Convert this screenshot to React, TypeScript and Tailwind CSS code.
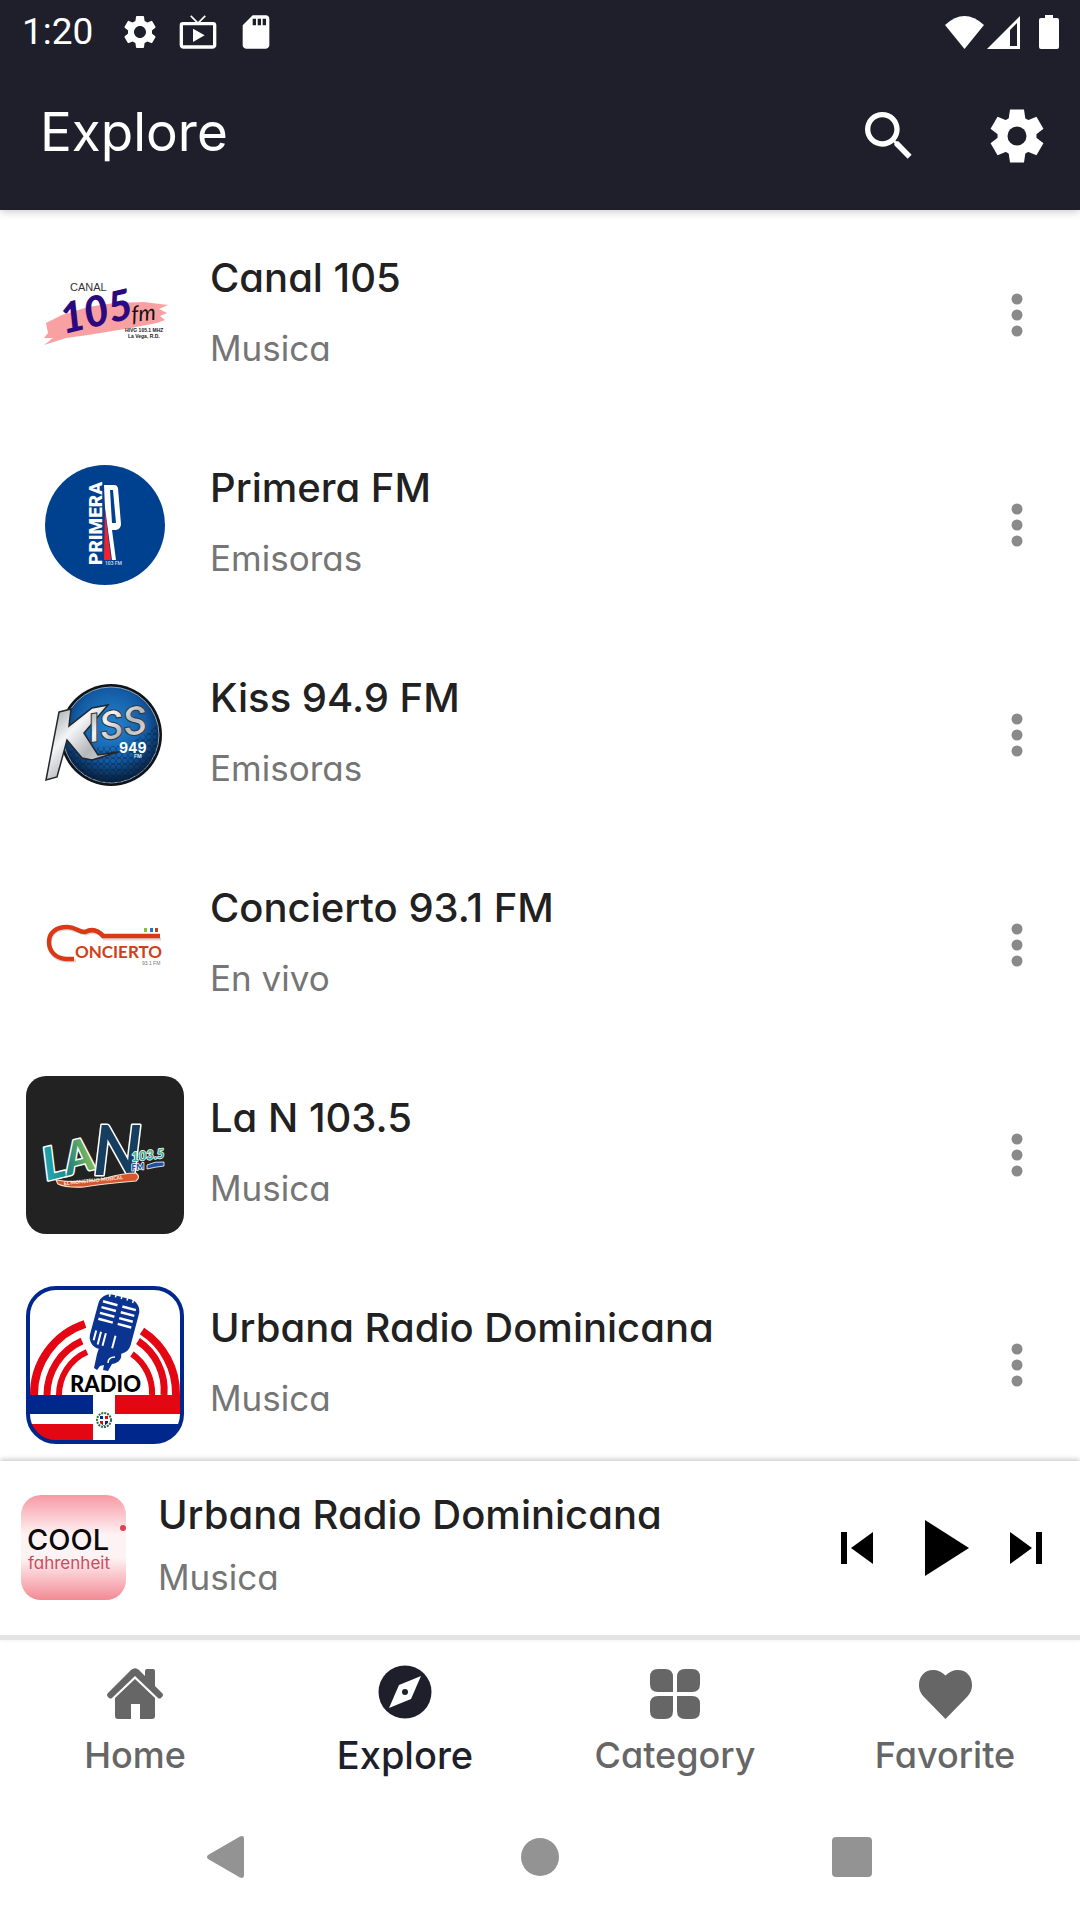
import type { ReactNode } from "react";
import { MdLiveTv, MdSdStorage, MdSearch, MdSettings } from "react-icons/md";

const round = { fontFeatureSettings: '"cv11"' };

function CanalLogo() {
  return (
    <svg viewBox="0 0 158 158" className="size-full" aria-hidden="true">
      <path
        d="M20 87 36 79 62 71 88 67 118 66 142 69 133 73 141 77 134 80 139 84 131 87 105 92 62 99 40 102 18 109 27 102 18 102 22 97Z"
        fill="#f9a0a2"
      />
      <text x="44" y="55" fontSize="11" fontFamily="Liberation Sans" fill="#333">CANAL</text>
      <g transform="rotate(-13 38 99)">
        <text x="38" y="98" fontSize="42" fontWeight="900" fontStyle="italic" fontFamily="Lato, sans-serif" fill="#2b0a80">105</text>
      </g>
      <g transform="rotate(-5 104 87)">
        <text x="106" y="86" fontSize="22" fontStyle="italic" fontFamily="Lato, sans-serif" fill="#111">fm</text>
      </g>
      <text x="99" y="96" fontSize="5" fontWeight="700" fontFamily="Liberation Sans" fill="#222">HIVG 105.1 MHZ</text>
      <text x="102" y="102" fontSize="5" fontWeight="700" fontFamily="Liberation Sans" fill="#222">La Vega, R.D.</text>
    </svg>
  );
}

function PrimeraLogo() {
  return (
    <svg viewBox="0 0 158 158" className="size-full" aria-hidden="true">
      <circle cx="79" cy="79" r="60" fill="#00418f" />
      <text transform="rotate(-90 76 119)" x="76" y="119" fontSize="19" fontWeight="900" fontFamily="Roboto, sans-serif" fill="#fff">PRIMERA</text>
      <path d="M78 39h11q2 0 3 3l3 36q0 5-5 6h-4l4 30h-4L79 62Z" fill="#fff" />
      <path d="M84 44h3l3 33h-4Z" fill="#00418f" />
      <path d="M79 64 85 114H78Z" fill="#f4212c" />
      <text x="79" y="119" fontSize="5" fontWeight="700" fontFamily="Roboto" fill="#b9cbe6">103 FM</text>
    </svg>
  );
}

function KissLogo() {
  return (
    <svg viewBox="0 0 158 158" className="size-full" aria-hidden="true">
      <defs>
        <radialGradient id="kissDisc" cx="50%" cy="40%" r="62%">
          <stop offset="0" stopColor="#2486d2" />
          <stop offset="0.6" stopColor="#135ba5" />
          <stop offset="1" stopColor="#05172f" />
        </radialGradient>
        <linearGradient id="kissSilver" x1="0" y1="0" x2="1" y2="1">
          <stop offset="0" stopColor="#8b8f94" />
          <stop offset="0.35" stopColor="#f4f5f6" />
          <stop offset="0.6" stopColor="#b4b7bb" />
          <stop offset="1" stopColor="#eceded" />
        </linearGradient>
        <pattern id="kissMesh" width="6" height="6" patternUnits="userSpaceOnUse">
          <path d="M0 3 1.500.5h3L6 3 4.500 5.500h-3Z" fill="none" stroke="#04142c" strokeWidth="0.7" opacity="0.55" />
        </pattern>
      </defs>
      <circle cx="85" cy="79" r="51" fill="#101317" />
      <circle cx="85" cy="79" r="48" fill="url(#kissDisc)" stroke="#8fa4ba" strokeWidth="1" />
      <path d="M40 94a48 48 0 0 0 92 0l0-25-30 20Z" fill="url(#kissMesh)" />
      <path
        d="M33 56 45 53 43 70 66 52 82 49 58 77 72 99 92 96 66 104 56 102 41 84 31 121 20 124Z"
        fill="url(#kissSilver)"
        stroke="#22262b"
        strokeWidth="1.500"
      />
      <g transform="rotate(-10 64 90)">
        <text x="65" y="87" fontSize="40" fontWeight="700" fontStyle="italic" fontFamily="Roboto, sans-serif" fill="url(#kissSilver)" stroke="#30363d" strokeWidth="1">ISS</text>
      </g>
      <text x="93" y="97" fontSize="14" fontWeight="700" fontFamily="Inter, sans-serif" fill="#fff">949</text>
      <text x="108" y="102" fontSize="5" fontWeight="700" fontFamily="Inter, sans-serif" fill="#dfe8f2">FM</text>
    </svg>
  );
}

function ConciertoLogo() {
  return (
    <svg viewBox="0 0 158 158" className="size-full" aria-hidden="true">
      <path d="M50 95H41C28 95 24 86 24 79 24 66 32 63 41 63c9 0 12 5 19 5 5-2 13-3 18 5h57" fill="none" stroke="#d9d9d9" strokeWidth="3" />
      <path d="M48 93H40C28 92 23 84 23 76 23 66 31 61 41 61c9 0 11 5 18 5 6-3 12-3 18 4h57" fill="none" stroke="#d93a15" strokeWidth="4.500" />
      <path d="M118 62h3v4h-3Z" fill="#8bbf3a" />
      <path d="M124 62h3v4h-3Z" fill="#2f74b5" />
      <path d="M129 62h3v4h-3Z" fill="#b8432a" />
      <text x="49" y="92" fontSize="17" fontWeight="700" fontFamily="Lato, sans-serif" fill="#cf4016">ONCIERTO</text>
      <text x="116" y="99" fontSize="5" fontFamily="Liberation Sans" fill="#777">93.1 FM</text>
    </svg>
  );
}

function LanLogo() {
  return (
    <svg viewBox="0 0 158 158" className="size-full" aria-hidden="true">
      <defs>
        <linearGradient id="lanTeal" x1="0" x2="1">
          <stop offset="0" stopColor="#1fa9b5" />
          <stop offset="0.5" stopColor="#20857f" />
          <stop offset="1" stopColor="#8cc152" />
        </linearGradient>
        <linearGradient id="lanFm" x1="0" y1="0" x2="0" y2="1">
          <stop offset="0" stopColor="#63c06a" />
          <stop offset="1" stopColor="#1d9fc0" />
        </linearGradient>
      </defs>
      <g fontFamily="Lato, sans-serif" fontWeight="900" fontStyle="italic" stroke="#fff" strokeLinejoin="round">
        <g transform="rotate(-14 24 105)">
          <text x="21" y="104" fontSize="45" fill="url(#lanTeal)" strokeWidth="3" paintOrder="stroke">LA</text>
        </g>
        <text x="67" y="99" fontSize="68" fontWeight="700" fill="#163e5e" strokeWidth="3" paintOrder="stroke">N</text>
        <g transform="rotate(-7 104 88)">
          <text x="106" y="86" fontSize="13" fill="url(#lanFm)" strokeWidth="1.500" paintOrder="stroke">103.5</text>
          <text x="105" y="95" fontSize="9" fill="#1c4f9c" strokeWidth="1.500" paintOrder="stroke">FM</text>
        </g>
      </g>
      <path d="M121 89q8-4 17-3v4q-9 1-17 3Z" fill="#1c4f9c" stroke="#fff" strokeWidth="0.8" />
      <path d="M30 104q24 4 50-2 18-5 30-5 5 4 0 8-35 3-52 6-18 1-26-3Z" fill="#d9552b" stroke="#f6e0d0" strokeWidth="1.200" />
      <text transform="rotate(-6 40 108)" x="38" y="109" fontSize="5" fontWeight="700" fontFamily="Lato, sans-serif" fill="#fff3e0">EL MONSTRUO MUSICAL</text>
    </svg>
  );
}

function UrbanaLogo() {
  return (
    <svg viewBox="0 0 158 158" className="size-full" aria-hidden="true">
      <defs>
        <clipPath id="urbanaClip">
          <rect x="2" y="2" width="154" height="154" rx="28" />
        </clipPath>
      </defs>
      <g clipPath="url(#urbanaClip)">
        <path d="M0 0h158v158H0Z" fill="#fff" />
        <g fill="none" stroke="#e30613">
          <path d="M8 109A74 74 0 0 1 59 38M116 45a74 74 0 0 1 34 64" strokeWidth="8" />
          <path d="M21 109a59 59 0 0 1 35-54M112 55a59 59 0 0 1 26 54" strokeWidth="7" />
          <path d="M33 109a47 47 0 0 1 28-43M106 68a47 47 0 0 1 20 41" strokeWidth="6" />
        </g>
        <path d="M0 109h67v19H0Z" fill="#00278c" />
        <path d="M89 109h69v19H89Z" fill="#e30613" />
        <path d="M0 138h67v20H0Z" fill="#e30613" />
        <path d="M89 138h69v20H89Z" fill="#00278c" />
      </g>
      <rect x="2" y="2" width="154" height="154" rx="28" fill="none" stroke="#00278c" strokeWidth="4" />
      <g transform="rotate(15 88 40)">
        <rect x="67" y="10" width="42" height="56" rx="12" fill="#0b3490" />
        <g stroke="#fff" strokeWidth="2.500" fill="none">
          <path d="M71 19h15M71 25h15M71 31h15M71 37h15M91 19h14M91 25h14M91 31h14M91 37h14" />
          <path d="M72 49v10M77 49v13M82 49v13M92 49v13" strokeWidth="2" />
          <path d="M76 9v4M82 8v4M88 8v4M94 8v4M100 9v4" strokeWidth="1.500" />
        </g>
      </g>
      <path d="m73 62 22 4q2 10-9 12l-4 7-5-1 1-5-4 1-3 4-3-2 3-14Z" fill="#0b3490" />
      <path d="M82 77q0-6 7-6" stroke="#fff" strokeWidth="1.500" fill="none" />
      <text x="44" y="106" fontSize="22" fontWeight="900" fontFamily="Lato, sans-serif" fill="#000">RADIO</text>
      <circle cx="78" cy="134" r="7" fill="#fff" stroke="#2f6b3c" strokeWidth="2" strokeDasharray="2 1" />
      <path d="M74 130h8v7l-4 3-4-3Z" fill="#00278c" />
      <path d="M78 130h4v4h-4ZM74 134h4v5l-4-2Z" fill="#e30613" />
      <path d="M77 130h2v9h-2ZM74 133h8v2h-8Z" fill="#fff" />
    </svg>
  );
}

function CoolLogo() {
  return (
    <svg viewBox="0 0 105 105" className="size-[105px] shrink-0 rounded-[20px]" aria-hidden="true">
      <defs>
        <linearGradient id="cool" x1="0" y1="0" x2="0" y2="1">
          <stop offset="0" stopColor="#f799a4" />
          <stop offset="0.38" stopColor="#fef3f4" />
          <stop offset="0.6" stopColor="#fef3f4" />
          <stop offset="1" stopColor="#f38a94" />
        </linearGradient>
      </defs>
      <path d="M0 0h105v105H0Z" fill="url(#cool)" />
      <circle cx="102" cy="33" r="3" fill="#e04056" />
      <text x="6" y="55" fontSize="29" fontWeight="500" fontFamily="Inter, sans-serif" fill="#0a0a0a">COOL</text>
      <text x="7" y="74" fontSize="17" fontFamily="Inter, sans-serif" style={round} fill="#cc4a5e">fahrenheit</text>
    </svg>
  );
}

const stations: { name: string; genre: string; logo: ReactNode }[] = [
  { name: "Canal 105", genre: "Musica", logo: <CanalLogo /> },
  { name: "Primera FM", genre: "Emisoras", logo: <PrimeraLogo /> },
  { name: "Kiss 94.9 FM", genre: "Emisoras", logo: <KissLogo /> },
  { name: "Concierto 93.1 FM", genre: "En vivo", logo: <ConciertoLogo /> },
  { name: "La N 103.5", genre: "Musica", logo: <LanLogo /> },
  { name: "Urbana Radio Dominicana", genre: "Musica", logo: <UrbanaLogo /> },
];

function StatusBar() {
  return (
    <div className="flex items-center justify-between pt-2 pr-[21px] pl-[22px] font-[Roboto,sans-serif]">
      <div className="flex h-12 items-center">
        <span className="w-[98px] text-[37px] leading-12">1:20</span>
        <MdSettings className="mr-[18px] size-10" />
        <MdLiveTv className="mr-[18px] size-10" />
        <MdSdStorage className="size-10" />
      </div>
      <div className="flex h-12 items-center">
        <svg viewBox="0 0 39 33" className="mr-[3px] h-[33px] w-[39px]" fill="currentColor" aria-hidden="true">
          <path d="M0 9Q19.500-9 39 9L19.500 33Z" />
        </svg>
        <svg viewBox="0 0 33 33" className="mr-[19px] size-[33px]" aria-hidden="true">
          <path d="M33 0v33H0Z" fill="#fff" />
          <path d="m23 14 7-7v23h-7Z" fill="#1e1f2b" />
        </svg>
        <svg viewBox="0 0 20 34" className="h-[34px] w-5" fill="currentColor" aria-hidden="true">
          <path d="M6 0h8v3h4q2 0 2 2v27q0 2-2 2H2q-2 0-2-2V5q0-2 2-2h4Z" />
        </svg>
      </div>
    </div>
  );
}

function Gear() {
  const tooth = "M-7-26.500H7L8.500-16h-17Z";
  return (
    <svg viewBox="-27 -27 54 54" className="size-[54px]" aria-hidden="true">
      <g fill="#fff">
        <circle r="19.500" />
        <path d={tooth} />
        <path d={tooth} transform="rotate(60)" />
        <path d={tooth} transform="rotate(120)" />
        <path d={tooth} transform="rotate(180)" />
        <path d={tooth} transform="rotate(240)" />
        <path d={tooth} transform="rotate(300)" />
      </g>
      <circle r="9.500" fill="#1e1f2b" />
    </svg>
  );
}

function NavItem({ label, active, children }: { label: string; active?: boolean; children: ReactNode }) {
  return (
    <a
      href={"#" + label.toLowerCase()}
      aria-current={active ? "page" : undefined}
      className={
        active
          ? "flex flex-col items-center text-[38px] font-medium text-[#1e1f2b]"
          : "flex flex-col items-center text-[36px] font-medium text-[#666]"
      }
    >
      <span className={active ? "flex h-[54px] items-start" : "flex h-[54px] items-end"}>{children}</span>
      <span className="leading-[72px]">{label}</span>
    </a>
  );
}

export default function App() {
  return (
    <div className="flex h-screen flex-col bg-white font-[Inter,sans-serif]" style={round}>
      <header className="relative z-10 bg-[#1e1f2b] text-white shadow-[0_2px_8px_rgba(0,0,0,0.2)]">
        <StatusBar />
        <div className="flex items-start justify-between pt-9 pr-[36px] pb-[38px] pl-[40px]">
          <h1 className="text-[53px] leading-20">Explore</h1>
          <div className="flex items-center gap-[69px] pt-3">
            <button type="button" aria-label="Search">
              <MdSearch className="size-16" />
            </button>
            <button type="button" aria-label="Settings">
              <Gear />
            </button>
          </div>
        </div>
      </header>

      <main className="min-h-0 flex-1 overflow-y-auto [scrollbar-width:none]">
        <ul>
          {stations.map((s) => (
            <li key={s.name} className="flex items-center p-[26px]">
              <div
                className={
                  s.name === "La N 103.5"
                    ? "size-[158px] shrink-0 overflow-hidden rounded-[20px] bg-[#222]"
                    : "size-[158px] shrink-0"
                }
              >
                {s.logo}
              </div>
              <div className="flex min-w-0 flex-1 flex-col gap-2 pb-1.5 pl-[26px]">
                <h2 className="truncate text-[40px] leading-16 font-medium text-[#212121]">{s.name}</h2>
                <p className="text-[35px] leading-[60px] text-[#757575]">{s.genre}</p>
              </div>
              <button type="button" aria-label={"More options for " + s.name} className="px-[31px]">
                <svg viewBox="0 0 12 44" className="h-11 w-3" fill="#8a8a8a" aria-hidden="true">
                  <circle cx="6" cy="6" r="5.500" />
                  <circle cx="6" cy="22" r="5.500" />
                  <circle cx="6" cy="38" r="5.500" />
                </svg>
              </button>
            </li>
          ))}
        </ul>
      </main>

      <section
        aria-label="Now playing"
        className="relative z-10 flex items-center border-b-[5px] border-[#e4e4e4] bg-white pt-[34px] pr-[27px] pb-[35px] pl-[21px] shadow-[0_-2px_5px_rgba(0,0,0,0.2)]"
      >
        <CoolLogo />
        <div className="-my-4 flex min-w-0 flex-1 flex-col pb-1.5 pl-8">
          <h2 className="truncate text-[40px] leading-16 font-medium text-[#212121]">Urbana Radio Dominicana</h2>
          <p className="text-[35px] leading-[60px] text-[#757575]">Musica</p>
        </div>
        <div className="flex items-center gap-10">
          <button type="button" aria-label="Previous" className="w-11">
            <svg viewBox="0 0 34 32" className="h-8 w-[34px]" aria-hidden="true">
              <path d="M0 0h6v32H0ZM32 0v32L10 16Z" />
            </svg>
          </button>
          <button type="button" aria-label="Play" className="w-11">
            <svg viewBox="0 0 44 56" className="h-14 w-11" aria-hidden="true">
              <path d="M0 0v56l44-28Z" />
            </svg>
          </button>
          <button type="button" aria-label="Next" className="w-11">
            <svg viewBox="0 0 34 32" className="h-8 w-[34px]" aria-hidden="true">
              <path d="M27 0h6v32h-6ZM1 0v32l22-16Z" />
            </svg>
          </button>
        </div>
      </section>

      <nav aria-label="Main" className="grid grid-cols-4 pt-[25px] pb-1">
        <NavItem label="Home">
          <svg viewBox="0 0 56 51" className="h-[51px] w-14" fill="currentColor" aria-hidden="true">
            <path d="M24 2q4-3.500 8 0l6 6V3q0-2 2-2h6q2 0 2 2v15l7 7q2 2 0 4l-1 1q-2 1-3 0L28 8 5 30q-1 1-3 0l-1-1q-2-2 0-4Z" />
            <path d="m28 11 20 19v18q0 3-3 3H33V36h-9v15H11q-3 0-3-3V30Z" />
          </svg>
        </NavItem>
        <NavItem label="Explore" active>
          <svg viewBox="0 0 54 54" className="size-[54px]" aria-hidden="true">
            <circle cx="27" cy="27" r="26.500" fill="#1e1f2b" />
            <path d="M43 11 33 34 11 43 21 20Z" fill="#fff" />
            <circle cx="27" cy="27" r="3" fill="#1e1f2b" />
          </svg>
        </NavItem>
        <NavItem label="Category">
          <svg viewBox="0 0 50 50" className="size-[50px]" fill="currentColor" aria-hidden="true">
            <path d="M8 0h7q8 0 8 8v15H8q-8 0-8-8V8q0-8 8-8Z" />
            <path d="M35 0h7q8 0 8 8v7q0 8-8 8H27V8q0-8 8-8Z" />
            <path d="M8 27h15v15q0 8-8 8H8q-8 0-8-8v-7q0-8 8-8Z" />
            <path d="M27 27h15q8 0 8 8v7q0 8-8 8h-7q-8 0-8-8Z" />
          </svg>
        </NavItem>
        <NavItem label="Favorite">
          <svg viewBox="0 0 53 49" className="h-[49px] w-[53px]" fill="currentColor" aria-hidden="true">
            <path d="M26.500 49 6 28C1 23 0 19 0 15 0 6 6 0 14 0c5 0 9 2 12.500 5.500C30 2 34 0 39 0c8 0 14 6 14 15 0 4-1 8-6 13Z" />
          </svg>
        </NavItem>
      </nav>

      <div className="grid grid-cols-3 place-items-center px-[72px] pt-[41px] pb-[42px]">
        <button type="button" aria-label="Back">
          <svg viewBox="0 0 42 42" className="size-[42px]" fill="#939393" aria-hidden="true">
            <path d="M33 .5q4-1.500 4 2v37q0 3.500-4 2L1 23q-2-2 0-4Z" />
          </svg>
        </button>
        <button type="button" aria-label="Home screen" className="size-[38px] rounded-full bg-[#939393]" />
        <button type="button" aria-label="Recent apps" className="size-10 rounded bg-[#939393]" />
      </div>
    </div>
  );
}
